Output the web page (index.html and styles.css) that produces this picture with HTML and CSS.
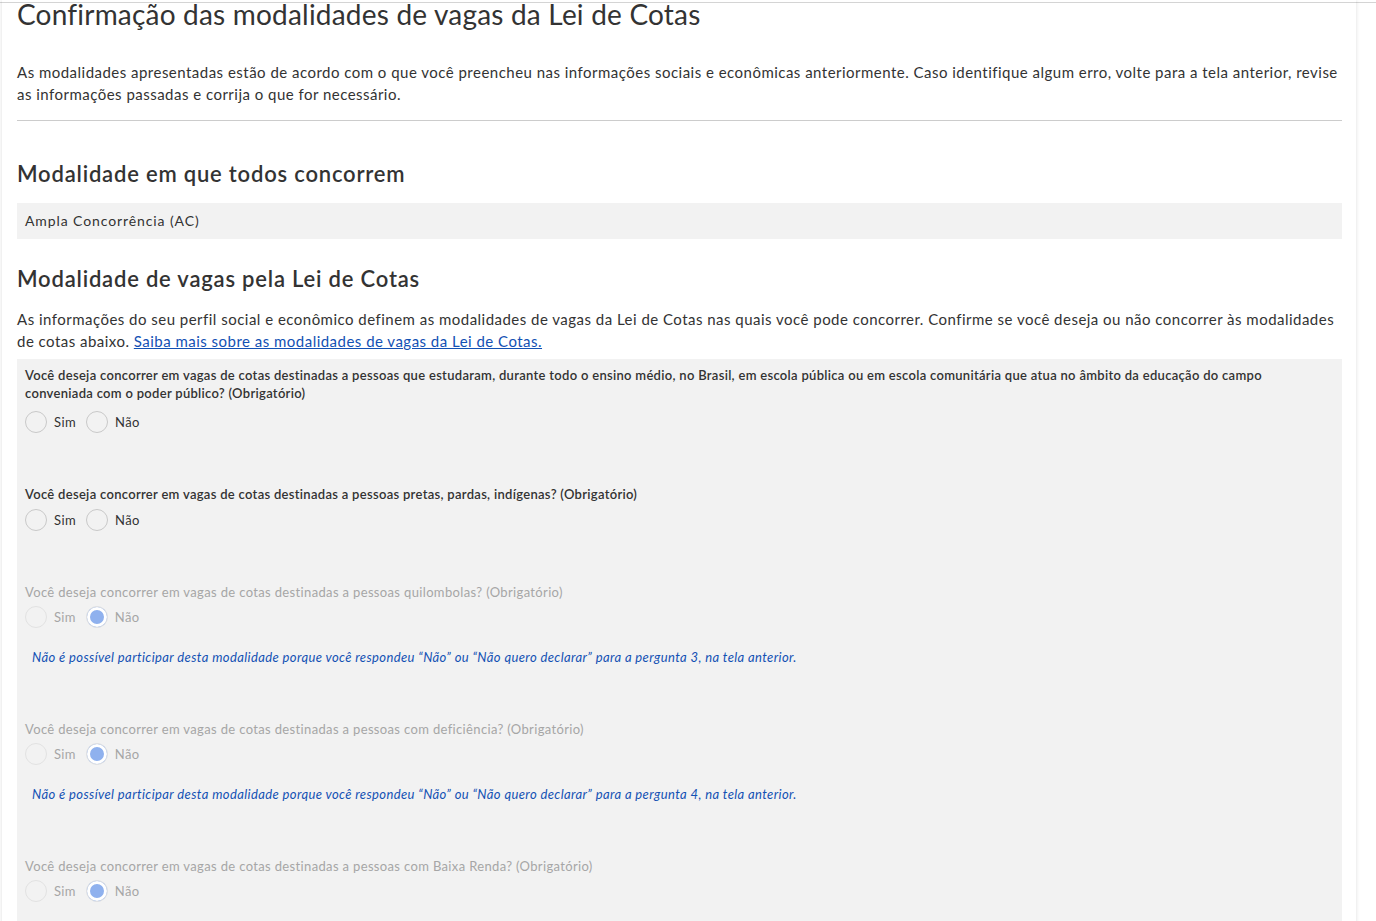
FILE: index.html
```html
<!DOCTYPE html>
<html lang="pt-BR">
<head>
    <meta charset="UTF-8">
    <title>Confirmação das modalidades</title>
    <link rel="stylesheet" href="styles.css">
</head>
<body>
    <div class="topbar"></div>
    <div class="card">
        <h1>Confirmação das modalidades de vagas da Lei de Cotas</h1>
        <p class="intro">As modalidades apresentadas estão de acordo com o que você preencheu nas informações sociais e econômicas anteriormente. Caso identifique algum erro, volte para a tela anterior, revise as informações passadas e corrija o que for necessário.</p>
        <hr>
        <h2 class="first">Modalidade em que todos concorrem</h2>
        <div class="ampla">Ampla Concorrência (AC)</div>
        <h2>Modalidade de vagas pela Lei de Cotas</h2>
        <p class="intro second">As informações do seu perfil social e econômico definem as modalidades de vagas da Lei de Cotas nas quais você pode concorrer. Confirme se você deseja ou não concorrer às modalidades de cotas abaixo. <a href="#">Saiba mais sobre as modalidades de vagas da Lei de Cotas.</a></p>

        <div class="questions">
            <div class="question">
                <div class="label">Você deseja concorrer em vagas de cotas destinadas a pessoas que estudaram, durante todo o ensino médio, no Brasil, em escola pública ou em escola comunitária que atua no âmbito da educação do campo conveniada com o poder público? (Obrigatório)</div>
                <div class="options wide">
                    <span class="radio"></span><span class="opt">Sim</span>
                    <span class="radio"></span><span class="opt">Não</span>
                </div>
            </div>
            <div class="question">
                <div class="label">Você deseja concorrer em vagas de cotas destinadas a pessoas pretas, pardas, indígenas? (Obrigatório)</div>
                <div class="options">
                    <span class="radio"></span><span class="opt">Sim</span>
                    <span class="radio"></span><span class="opt">Não</span>
                </div>
            </div>
            <div class="question disabled has-note">
                <div class="label">Você deseja concorrer em vagas de cotas destinadas a pessoas quilombolas? (Obrigatório)</div>
                <div class="options">
                    <span class="radio"></span><span class="opt">Sim</span>
                    <span class="radio checked"></span><span class="opt">Não</span>
                </div>
                <div class="note">Não é possível participar desta modalidade porque você respondeu “Não” ou “Não quero declarar” para a pergunta 3, na tela anterior.</div>
            </div>
            <div class="question disabled has-note">
                <div class="label">Você deseja concorrer em vagas de cotas destinadas a pessoas com deficiência? (Obrigatório)</div>
                <div class="options">
                    <span class="radio"></span><span class="opt">Sim</span>
                    <span class="radio checked"></span><span class="opt">Não</span>
                </div>
                <div class="note">Não é possível participar desta modalidade porque você respondeu “Não” ou “Não quero declarar” para a pergunta 4, na tela anterior.</div>
            </div>
            <div class="question disabled">
                <div class="label">Você deseja concorrer em vagas de cotas destinadas a pessoas com Baixa Renda? (Obrigatório)</div>
                <div class="options">
                    <span class="radio"></span><span class="opt">Sim</span>
                    <span class="radio checked"></span><span class="opt">Não</span>
                </div>
            </div>
        </div>
    </div>
</body>
</html>
```

FILE: styles.css
```css
body {
    margin: 0;
    font-family: Lato, "Open Sans", sans-serif;
    color: #333;
    background: #fff;
    overflow: hidden;
}
.topbar {
    height: 2px;
    border-bottom: 1px solid #d4d4d4;
}
.card {
    margin: 0 20px 0 2px;
    padding: 0 14px 40px 15px;
    box-shadow: 0 0 4px rgba(0, 0, 0, 0.14);
    min-height: 1000px;
}
h1 {
    margin: -3px 0 0;
    font-size: 28px;
    line-height: 28px;
    font-weight: 400;
    letter-spacing: 0.2px;
    color: #333;
}
.intro {
    margin: 33px 0 0;
    font-size: 15px;
    line-height: 22px;
    letter-spacing: 0.48px;
}
.intro.second {
    margin-top: 16px;
}
.intro a {
    color: #1351b4;
}
hr {
    margin: 15px 0 0;
    border: 0;
    border-top: 1px solid #ccc;
}
h2 {
    margin: 27px 0 0;
    font-size: 22px;
    line-height: 26px;
    font-weight: 600;
    letter-spacing: 0.8px;
    color: #333;
}
h2.first {
    margin-top: 40px;
}
.ampla {
    margin-top: 16px;
    background: #f2f2f2;
    height: 36px;
    line-height: 36px;
    padding: 0 8px;
    font-size: 14px;
    letter-spacing: 0.9px;
}
.questions {
    margin-top: 7px;
    background: #f2f2f2;
    padding: 7px 12px 40px 8px;
}
.question {
    margin-bottom: 52px;
}
.question.has-note {
    margin-bottom: 54px;
}
.label {
    font-size: 13px;
    line-height: 18px;
    font-weight: 600;
    letter-spacing: 0.3px;
    color: #333;
}
.options {
    display: flex;
    align-items: center;
    margin-top: 6px;
    font-size: 13px;
    letter-spacing: 0.4px;
}
.options.wide {
    margin-top: 9px;
}
.disabled .options {
    margin-top: 5px;
}
.radio {
    width: 20px;
    height: 20px;
    border: 1px solid #c9c9c9;
    border-radius: 50%;
    box-sizing: content-box;
}
.opt {
    margin: 0 10px 0 7px;
}
.disabled .label,
.disabled .opt {
    color: #a6a6a6;
    font-weight: 400;
    letter-spacing: 0.35px;
}
.disabled .radio {
    border-color: #e2e2e2;
}
.radio.checked {
    background: #8fb1ee;
    box-shadow: inset 0 0 0 3px #fff;
}
.note {
    margin: 20px 0 0 7px;
    font-size: 13px;
    line-height: 18px;
    font-style: italic;
    letter-spacing: 0.39px;
    color: #1351b4;
}
```
